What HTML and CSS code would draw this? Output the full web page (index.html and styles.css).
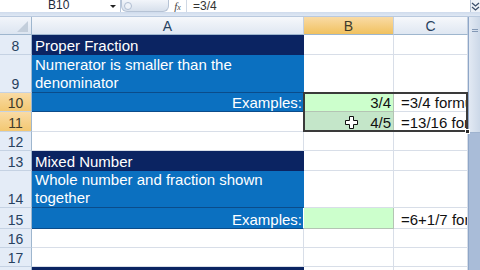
FILE: index.html
```html
<!DOCTYPE html>
<html lang="en">
<head>
    <meta charset="UTF-8">
    <meta name="viewport" content="width=device-width, initial-scale=1.0">
    <title>Fractions</title>
    <link rel="stylesheet" href="styles.css">
</head>
<body>
    <div class="formula-bar">
        <div class="name-box">
            <span class="name">B10</span>
            <span class="arrow"></span>
        </div>
        <div class="grip"><span class="knob"></span></div>
        <div class="fx">f<small>x</small></div>
        <div class="formula">=3/4</div>
        <div class="expand">
            <svg width="9" height="9" viewBox="0 0 9 9"><path d="M1 1 L4.5 4 L8 1 M1 5 L4.5 8 L8 5" fill="none" stroke="#3b4f6b" stroke-width="1.3"/></svg>
        </div>
    </div>
    <div class="band"></div>

    <div class="sheet">
        <div class="grid">
            <!-- column headers -->
            <div class="corner"></div>
            <div class="colhead">A</div>
            <div class="colhead sel">B</div>
            <div class="colhead">C</div>

            <!-- row 8 -->
            <div class="rowhead">8</div>
            <div class="cell navy">Proper Fraction</div>
            <div class="cell"></div>
            <div class="cell"></div>

            <!-- row 9 -->
            <div class="rowhead">9</div>
            <div class="cell blue wrap">Numerator is smaller than the denominator</div>
            <div class="cell"></div>
            <div class="cell"></div>

            <!-- row 10 -->
            <div class="rowhead sel">10</div>
            <div class="cell blue right edge">Examples:</div>
            <div class="cell green num">3/4</div>
            <div class="cell text">=3/4 formula</div>

            <!-- row 11 -->
            <div class="rowhead sel">11</div>
            <div class="cell"></div>
            <div class="cell green shaded num">4/5
                <svg class="cursor" width="13" height="13" viewBox="0 0 13 13"><path d="M4.5 0.5 H8.5 V4.5 H12.5 V8.5 H8.5 V12.5 H4.5 V8.5 H0.5 V4.5 H4.5 Z" fill="#fff" stroke="#111" stroke-width="1"/></svg>
            </div>
            <div class="cell text">=13/16 formula</div>

            <!-- row 12 -->
            <div class="rowhead">12</div>
            <div class="cell"></div>
            <div class="cell"></div>
            <div class="cell"></div>

            <!-- row 13 -->
            <div class="rowhead">13</div>
            <div class="cell navy">Mixed Number</div>
            <div class="cell"></div>
            <div class="cell"></div>

            <!-- row 14 -->
            <div class="rowhead">14</div>
            <div class="cell blue wrap">Whole number and fraction shown together</div>
            <div class="cell"></div>
            <div class="cell"></div>

            <!-- row 15 -->
            <div class="rowhead">15</div>
            <div class="cell blue right edge">Examples:</div>
            <div class="cell green"></div>
            <div class="cell text">=6+1/7 formula</div>

            <!-- row 16 -->
            <div class="rowhead">16</div>
            <div class="cell"></div>
            <div class="cell"></div>
            <div class="cell"></div>

            <!-- row 17 -->
            <div class="rowhead">17</div>
            <div class="cell"></div>
            <div class="cell"></div>
            <div class="cell"></div>

            <!-- row 18 -->
            <div class="rowhead">18</div>
            <div class="cell navy"></div>
            <div class="cell"></div>
            <div class="cell"></div>

            <!-- selection B10:B11 -->
            <div class="selection"><span class="handle"></span></div>
        </div>
        <div class="vscroll">
            <div class="thumb"><span class="lines"></span></div>
        </div>
    </div>
</body>
</html>
```

FILE: styles.css
```css
/* hoja de calculo estilo Excel 2007 */
* {
    box-sizing: border-box;
}
body {
    margin: 0;
    width: 480px;
    height: 270px;
    overflow: hidden;
    background: #fff;
    font-family: "Liberation Sans", Arial, sans-serif;
}

/* barra de formulas */
.formula-bar {
    display: flex;
    align-items: stretch;
    height: 12px;
    background: #fff;
    font-size: 12px;
    color: #1d2a3c;
}
.name-box {
    width: 121px;
    display: flex;
    align-items: flex-end;
    border-right: 1px solid #b8c7db;
}
.name-box .name {
    margin-left: 48px;
    line-height: 12px;
    margin-bottom: 1px;
}
.name-box .arrow {
    margin-left: auto;
    margin-right: 4px;
    margin-bottom: 4px;
    border-left: 3px solid transparent;
    border-right: 3px solid transparent;
    border-top: 3px solid #222;
}
.grip {
    width: 48px;
    background: linear-gradient(#f2f5fa, #d7e0ec);
    border: 1px solid #b6c3d5;
    border-top: none;
    border-radius: 0 0 6px 6px;
    display: flex;
    align-items: center;
}
.grip .knob {
    width: 8px;
    height: 8px;
    margin-left: 2px;
    border-radius: 50%;
    border: 1px solid #b0bed2;
    background: #eef2f8;
}
.fx {
    width: 18px;
    text-align: center;
    font-family: "Liberation Serif", serif;
    font-style: italic;
    font-size: 11px;
    line-height: 12px;
    color: #444;
    border-right: 1px solid #cfd8e4;
}
.fx small {
    font-size: 8px;
}
.formula {
    flex: 1;
    padding-left: 6px;
    line-height: 12px;
    color: #333;
}
.expand {
    width: 10px;
    display: flex;
    align-items: center;
    justify-content: center;
    background: #eef2f8;
    border-left: 1px solid #b6c3d5;
}
.band {
    height: 5px;
    background: linear-gradient(#cfdbec, #dfe8f4);
    border-bottom: 1px solid #b9c9de;
}

/* hoja */
.sheet {
    display: flex;
}
.grid {
    display: grid;
    grid-template-columns: 32px 272px 90px 74px;
    grid-template-rows: 18px 20px 38px 19px 20px 19px 20px 37px 21px 19px 19px 20px;
    position: relative;
}
.corner {
    position: relative;
    background: linear-gradient(#f2f5fa, #dce5f1);
    border-right: 1px solid #9eb6ce;
    border-bottom: 1px solid #9eb6ce;
}
.corner::after {
    content: "";
    position: absolute;
    right: 3px;
    bottom: 2px;
    border-left: 11px solid transparent;
    border-bottom: 11px solid #c3cedb;
}
.colhead {
    background: linear-gradient(#f6f8fb, #dfe7f2);
    border-right: 1px solid #c3d0e0;
    border-bottom: 1px solid #9eb6ce;
    text-align: center;
    font-size: 14px;
    line-height: 18px;
    color: #27415f;
}
.colhead.sel {
    background: linear-gradient(#f9dba5, #f1c15f);
    color: #3e3a2a;
}
.rowhead {
    display: flex;
    align-items: flex-end;
    justify-content: center;
    background: #e4ecf7;
    border-right: 1px solid #9eb6ce;
    border-bottom: 1px solid #c5d2e3;
    font-size: 14px;
    line-height: 16px;
    color: #27415f;
}
.rowhead.sel {
    background: linear-gradient(#f9dba5, #f3c872);
    color: #3e3a2a;
}
.cell {
    display: flex;
    align-items: flex-end;
    border-right: 1px solid #d8dee8;
    border-bottom: 1px solid #d8dee8;
    font-size: 15px;
    line-height: 16px;
    padding: 0 3px;
    white-space: nowrap;
    color: #111;
    position: relative;
}
.cell.navy {
    background: #0b2462;
    color: #fff;
    border-color: #0b2462;
}
.cell.blue {
    background: #0b70c0;
    color: #fff;
    border-color: #0b70c0;
    border-bottom-color: #0b4c8a;
}
.cell.wrap {
    white-space: normal;
    line-height: 18px;
    padding-right: 8px;
}
.cell.right {
    justify-content: flex-end;
    padding-right: 1px;
}
.cell.edge {
    border-right-color: #fff;
}
.cell.green {
    background: #ccffcc;
    border-right-color: #b4c4b4;
    border-bottom-color: #b4c4b4;
}
.cell.shaded {
    background: #c4e6c9;
}
.cell.num {
    justify-content: flex-end;
    padding-right: 2px;
}
.cell.text {
    overflow: hidden;
    padding-left: 7px;
}
.cursor {
    position: absolute;
    left: 41px;
    top: 4px;
}

/* seleccion: encima de B10:B11 */
.selection {
    position: absolute;
    grid-column: 3;
    grid-row: 4 / 6;
    top: -1px;
    left: -1px;
    right: 0;
    bottom: 0;
    border: 2px solid #3a3a3a;
    pointer-events: none;
}
.handle {
    position: absolute;
    right: -4px;
    bottom: -4px;
    width: 5px;
    height: 5px;
    background: #2a2a2a;
    border: 1px solid #fff;
}

/* barra de desplazamiento */
.vscroll {
    width: 12px;
    height: 253px;
    background: #a9bcd8;
    border-left: 1px solid #8ea6c8;
}
.thumb {
    height: 116px;
    background: linear-gradient(90deg, #e2e9f3, #ccd8e8);
    border-bottom: 1px solid #9fb3cf;
    display: flex;
    justify-content: center;
    padding-top: 12px;
}
.thumb .lines {
    width: 6px;
    height: 3px;
    border-top: 1px solid #8398b5;
    border-bottom: 1px solid #8398b5;
}
```
